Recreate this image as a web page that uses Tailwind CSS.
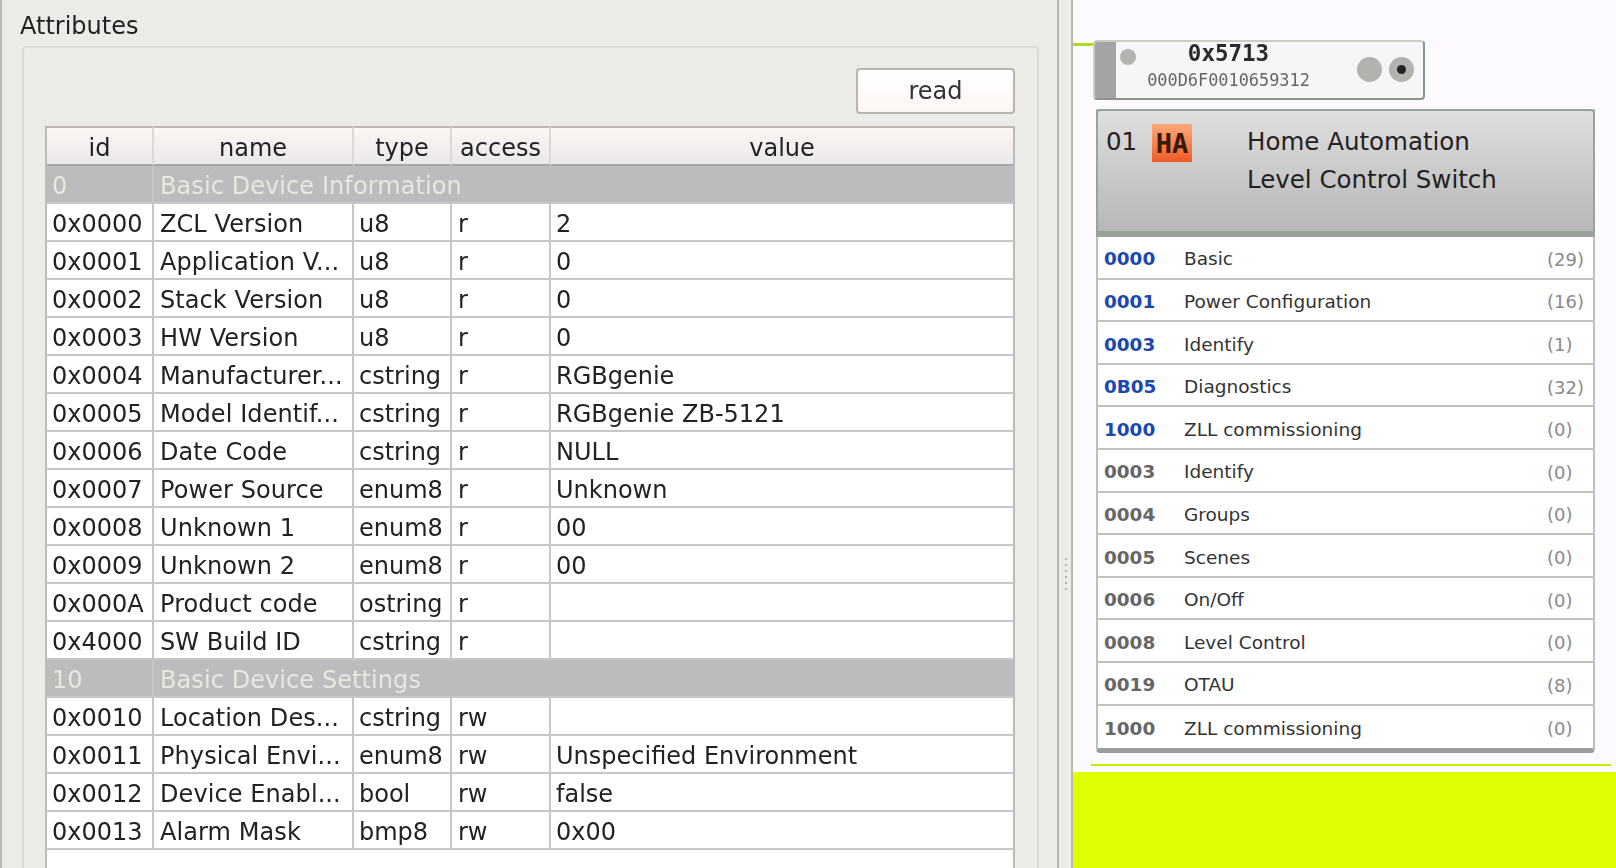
<!DOCTYPE html>
<html lang="en">
<head>
    <meta charset="UTF-8">
    <title>Attributes</title>
    <script src="https://cdn.jsdelivr.net/npm/@tailwindcss/browser@4"></script>
</head>
<body class="h-screen overflow-hidden bg-[#edebe7] font-['DejaVu_Sans',sans-serif] text-[24px] text-[#222]">
<div class="flex h-[868px] overflow-hidden blur-[0.4px]">

    <!-- attribute panel -->
    <section class="w-[1059px] shrink-0 border-l-2 border-r-2 border-[#bdb6b2] pl-[20px] pr-[18px]">
        <h2 class="-ml-[2px] h-[46px] pt-[10px] leading-[32px] text-[24px]">Attributes</h2>
        <div class="h-[840px] rounded-t border-2 border-[#dcdad6] pl-[21px] pr-[22px] pt-[20px]">
            <div class="flex justify-end">
                <button class="h-[46px] w-[159px] rounded border-2 border-[#b8b4ae] bg-gradient-to-b from-white to-[#fdf6f4] text-[24px] text-[#333]">read</button>
            </div>
            <div class="mt-[12px] h-[760px] border-x-2 border-[#bdbbb9] bg-white">
                <table class="w-full table-fixed border-separate border-spacing-0 leading-[32px] [&_td]:h-[38px] [&_td]:border-b-2 [&_td]:border-r-2 [&_td]:border-[#c8c6c4] [&_td]:p-0 [&_td]:pt-[4px] [&_td]:pl-[6px] [&_td]:whitespace-nowrap [&_td:first-child]:pl-[5px] [&_td:nth-child(2)]:tracking-[0.08px] [&_td:nth-child(3)]:pl-[5px] [&_td:last-child]:border-r-0 [&_td:nth-child(5)]:pl-[5px]">
                    <colgroup>
                        <col class="w-[107px]"><col class="w-[200px]"><col class="w-[98px]"><col class="w-[99px]"><col>
                    </colgroup>
                    <thead class="[&_th]:h-[40px] [&_th]:border-t-2 [&_th]:border-b-2 [&_th]:border-r-2 [&_th]:border-t-[#bdb6b2] [&_th]:border-b-[#aaa6a4] [&_th]:border-r-[#dbd8d6] [&_th]:bg-gradient-to-b [&_th]:from-[#fdf6f4] [&_th]:to-[#eae8e8] [&_th]:p-0 [&_th]:pt-[4px] [&_th]:font-normal [&_th:last-child]:border-r-0">
                        <tr><th>id</th><th>name</th><th>type</th><th>access</th><th>value</th></tr>
                    </thead>
                    <tbody>
                        <tr class="bg-[#bcbcbc] text-[#e4eae0] [&_td]:border-[#c2c2c2]"><td>0</td><td colspan="4">Basic Device Information</td></tr>
                        <tr><td>0x0000</td><td>ZCL Version</td><td>u8</td><td>r</td><td>2</td></tr>
                        <tr><td>0x0001</td><td>Application V...</td><td>u8</td><td>r</td><td>0</td></tr>
                        <tr><td>0x0002</td><td>Stack Version</td><td>u8</td><td>r</td><td>0</td></tr>
                        <tr><td>0x0003</td><td>HW Version</td><td>u8</td><td>r</td><td>0</td></tr>
                        <tr><td>0x0004</td><td>Manufacturer...</td><td>cstring</td><td>r</td><td>RGBgenie</td></tr>
                        <tr><td>0x0005</td><td>Model Identif...</td><td>cstring</td><td>r</td><td>RGBgenie ZB-5121</td></tr>
                        <tr><td>0x0006</td><td>Date Code</td><td>cstring</td><td>r</td><td>NULL</td></tr>
                        <tr><td>0x0007</td><td>Power Source</td><td>enum8</td><td>r</td><td>Unknown</td></tr>
                        <tr><td>0x0008</td><td>Unknown 1</td><td>enum8</td><td>r</td><td>00</td></tr>
                        <tr><td>0x0009</td><td>Unknown 2</td><td>enum8</td><td>r</td><td>00</td></tr>
                        <tr><td>0x000A</td><td>Product code</td><td>ostring</td><td>r</td><td></td></tr>
                        <tr><td>0x4000</td><td>SW Build ID</td><td>cstring</td><td>r</td><td></td></tr>
                        <tr class="bg-[#bcbcbc] text-[#e4eae0] [&_td]:border-[#c2c2c2]"><td>10</td><td colspan="4">Basic Device Settings</td></tr>
                        <tr><td>0x0010</td><td>Location Des...</td><td>cstring</td><td>rw</td><td></td></tr>
                        <tr><td>0x0011</td><td>Physical Envi...</td><td>enum8</td><td>rw</td><td>Unspecified Environment</td></tr>
                        <tr><td>0x0012</td><td>Device Enabl...</td><td>bool</td><td>rw</td><td>false</td></tr>
                        <tr><td>0x0013</td><td>Alarm Mask</td><td>bmp8</td><td>rw</td><td>0x00</td></tr>
                    </tbody>
                </table>
            </div>
        </div>
    </section>

    <!-- splitter -->
    <div class="flex w-[12px] shrink-0 flex-col items-end justify-end gap-[4px] pb-[278px] pr-[4px]">
        <span class="size-[2px] bg-[#b5b2ae]"></span>
        <span class="size-[2px] bg-[#b5b2ae]"></span>
        <span class="size-[2px] bg-[#b5b2ae]"></span>
        <span class="size-[2px] bg-[#b5b2ae]"></span>
        <span class="size-[2px] bg-[#b5b2ae]"></span>
        <span class="size-[2px] bg-[#b5b2ae]"></span>
    </div>

    <!-- node canvas, origin x=1071 -->
    <div class="relative flex-1 border-l-2 border-[#bdb6b2] bg-[#fdfaff]">
        <div class="absolute left-0 top-[43px] h-[3px] w-[22px] bg-[#a8e020]"></div>

        <!-- device node -->
        <div class="absolute left-[20px] top-[40px] flex h-[60px] w-[332px] overflow-hidden rounded-[4px] border-2 border-[#cbcbc8] border-b-[#8a948b] border-r-[#8a948b] bg-[#f5f6f5]">
            <div class="w-[21px] shrink-0 bg-[#a3a3a3]"></div>
            <span class="ml-[4px] mt-[7px] size-[16px] shrink-0 rounded-full bg-[#b0b3ae]"></span>
            <div class="ml-[1px] -mt-[1px] w-[183px] shrink-0 text-center font-['DejaVu_Sans_Mono',monospace] text-[#2b2b2b]">
                <div class="text-[22.5px] font-bold leading-[24px]">0x5713</div>
                <div class="mt-[4px] text-[16.9px] leading-[22px] text-[#666]">000D6F0010659312</div>
            </div>
            <span class="ml-[37px] mt-[15px] size-[25px] shrink-0 rounded-full bg-[#b0b3ae]"></span>
            <span class="ml-[7px] mt-[15px] flex size-[25px] shrink-0 items-center justify-center rounded-full bg-[#b0b3ae]">
                <span class="size-[9px] rounded-full bg-[#222]"></span>
            </span>
        </div>

        <!-- endpoint node -->
        <div class="absolute left-[23px] top-[109px] w-[499px] rounded-b-[4px] border-x-2 border-b-[5px] border-x-[#b9c2b9] border-b-[#9a9d9a] bg-white">
            <div class="-mx-[2px] flex h-[128px] rounded-t-[4px] border-2 border-b-[6px] border-[#9aa39a] bg-gradient-to-b from-[#e0dfdf] to-[#b7b6b8] pt-[13px] text-[24.5px]">
                <span class="ml-[8px] h-[36px] w-[46px] leading-[36px]">01</span>
                <span class="flex h-[38px] w-[40px] items-center justify-center bg-gradient-to-b from-[#fda878] to-[#ee5a20] font-['DejaVu_Sans_Mono',monospace] text-[27px] font-bold leading-none text-[#3a1a05]">HA</span>
                <div class="ml-[55px] -mt-[1px] leading-[37.5px]">
                    <div>Home Automation</div>
                    <div>Level Control Switch</div>
                </div>
            </div>
            <div class="text-[18.5px] text-[#333] [&>div]:flex [&>div]:h-[42.6px] [&>div]:items-center [&>div]:border-b-2 [&>div]:border-[#bcc4bc] [&>div]:pt-[4px] [&>div>b]:w-[86px] [&>div>b]:pl-[6px] [&>div>b]:text-[18.4px] [&>div>b]:text-[#666] [&>div>i]:not-italic [&>div>i]:ml-auto [&>div>i]:w-[46px] [&>div>i]:text-[18px] [&>div>i]:text-[#8a8a8a] [&>div:last-child]:border-b-0">
                <div><b class="!text-[#1a47b0]">0000</b><span>Basic</span><i>(29)</i></div>
                <div><b class="!text-[#1a47b0]">0001</b><span>Power Configuration</span><i>(16)</i></div>
                <div><b class="!text-[#1a47b0]">0003</b><span>Identify</span><i>(1)</i></div>
                <div><b class="!text-[#1a47b0]">0B05</b><span>Diagnostics</span><i>(32)</i></div>
                <div><b class="!text-[#1a47b0]">1000</b><span>ZLL commissioning</span><i>(0)</i></div>
                <div><b>0003</b><span>Identify</span><i>(0)</i></div>
                <div><b>0004</b><span>Groups</span><i>(0)</i></div>
                <div><b>0005</b><span>Scenes</span><i>(0)</i></div>
                <div><b>0006</b><span>On/Off</span><i>(0)</i></div>
                <div><b>0008</b><span>Level Control</span><i>(0)</i></div>
                <div><b>0019</b><span>OTAU</span><i>(8)</i></div>
                <div><b>1000</b><span>ZLL commissioning</span><i>(0)</i></div>
            </div>
        </div>

        <div class="absolute left-[18px] top-[764px] h-[2px] w-[520px] bg-[#c4f000]"></div>
        <div class="absolute inset-x-0 top-[772px] h-[96px] bg-[#e0ff00]"></div>
    </div>
</div>
</body>
</html>
